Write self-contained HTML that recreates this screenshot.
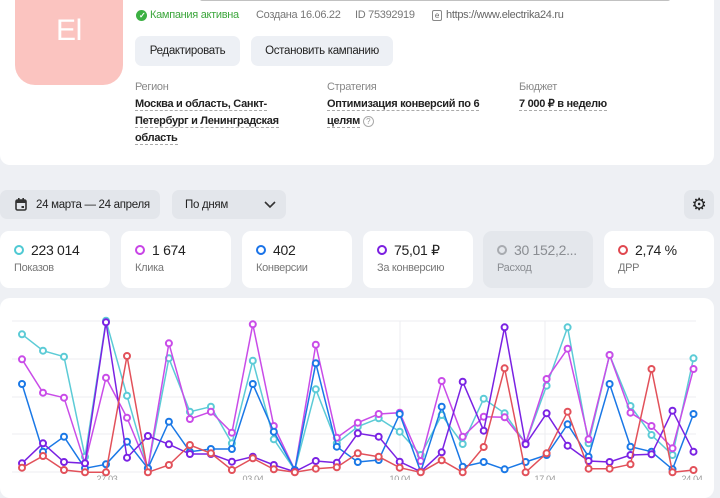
<!DOCTYPE html>
<html><head><meta charset="utf-8"><style>
*{box-sizing:border-box;margin:0;padding:0}
body{width:720px;height:480px;overflow:hidden;background:#eef0f4;font-family:"Liberation Sans",sans-serif;position:relative;color:#1f1f1f;letter-spacing:-0.3px}
.abs{position:absolute;white-space:nowrap}
.card{position:absolute;background:#fff;border-radius:10px}
.btn{position:absolute;background:#edf0f5;border-radius:7px;font-size:11.5px;display:flex;align-items:center;justify-content:center;color:#222;white-space:nowrap}
.tb{background:#e3e6eb}
.lbl{font-size:11px;color:#888}
.val{font-size:11px;font-weight:bold;color:#222;line-height:17px}
.val span{border-bottom:1px dashed #aaa}
.m{position:absolute;top:231px;width:110px;height:57px;background:#fff;border-radius:9px}
.m .d{position:absolute;left:14px;top:14px;width:10px;height:10px;border-radius:50%;border:2.5px solid}
.m .n{position:absolute;left:31px;top:11px;font-size:14px;color:#222;white-space:nowrap}
.m .s{position:absolute;left:14px;top:31px;font-size:11px;color:#777}
</style></head><body>
<div class="card" style="left:0;top:-10px;width:714px;height:175px;border-radius:0 0 10px 10px"></div>
<div class="abs" style="left:15px;top:-20px;width:108px;height:105px;background:#fbc4c0;border-radius:20px"></div>
<div class="abs" style="left:15px;top:14px;width:108px;text-align:center;color:#fff;font-size:30px">El</div>
<div class="abs" style="left:200px;top:-5px;width:470px;height:6px;background:#333;border-radius:2px;opacity:.3"></div>
<div class="abs" style="left:136px;top:10px;width:11px;height:11px;border-radius:50%;background:#3cb043"></div>
<div class="abs" style="left:139px;top:11px;color:#fff;font-size:8px;font-weight:bold">✓</div>
<div class="abs" style="left:150px;top:9px;font-size:11px;color:#3ca63c">Кампания активна</div>
<div class="abs" style="left:256px;top:9px;font-size:11px;color:#777">Создана 16.06.22</div>
<div class="abs" style="left:355px;top:9px;font-size:11px;color:#777">ID 75392919</div>
<div class="abs" style="left:432px;top:10px;width:10px;height:11px;border:1px solid #888;border-radius:2px;font-size:8px;line-height:9px;text-align:center;color:#666">e</div>
<div class="abs" style="left:446px;top:9px;font-size:11px;color:#666">https://www.electrika24.ru</div>
<div class="btn" style="left:135px;top:36px;width:105px;height:30px">Редактировать</div>
<div class="btn" style="left:251px;top:36px;width:142px;height:30px">Остановить кампанию</div>
<div class="abs lbl" style="left:135px;top:81px">Регион</div>
<div class="abs lbl" style="left:327px;top:81px">Стратегия</div>
<div class="abs lbl" style="left:519px;top:81px">Бюджет</div>
<div class="abs val" style="left:135px;top:96px;width:160px"><span>Москва и область, Санкт-</span><br><span>Петербург и Ленинградская</span><br><span>область</span></div>
<div class="abs val" style="left:327px;top:96px;width:180px"><span>Оптимизация конверсий по 6</span><br><span>целям</span> <span style="border:1px solid #aaa;border-radius:50%;display:inline-block;width:11px;height:11px;font-size:8px;line-height:9px;text-align:center;color:#999;font-weight:normal">?</span></div>
<div class="abs val" style="left:519px;top:96px"><span>7 000 ₽ в неделю</span></div>

<div class="btn tb" style="left:0;top:190px;width:160px;height:29px;justify-content:flex-start;padding-left:15px">
<svg width="12" height="13" viewBox="0 0 12 13" style="margin-right:9px"><rect x="1" y="2" width="10" height="10" rx="1.5" fill="none" stroke="#333" stroke-width="1.6"/><rect x="1" y="2" width="10" height="3" fill="#333"/><rect x="3" y="0" width="1.6" height="3" fill="#333"/><rect x="7.4" y="0" width="1.6" height="3" fill="#333"/><rect x="6.5" y="8" width="2.5" height="2" fill="#333"/></svg>24 марта — 24 апреля</div>
<div class="btn tb" style="left:172px;top:190px;width:114px;height:29px;justify-content:flex-start;padding-left:13px">По дням
<svg width="12" height="8" style="position:absolute;right:10px;top:11px"><path d="M1 1l5 5 5-5" stroke="#333" stroke-width="1.6" fill="none"/></svg></div>
<div class="btn tb" style="left:684px;top:190px;width:30px;height:29px;font-size:17px">⚙</div>

<div class="m" style="left:0"><div class="d" style="border-color:#4fc9d3"></div><div class="n">223 014</div><div class="s">Показов</div></div>
<div class="m" style="left:121px"><div class="d" style="border-color:#c844e6"></div><div class="n">1 674</div><div class="s">Клика</div></div>
<div class="m" style="left:242px"><div class="d" style="border-color:#1a73e8"></div><div class="n">402</div><div class="s">Конверсии</div></div>
<div class="m" style="left:363px"><div class="d" style="border-color:#7b1fe0"></div><div class="n">75,01 ₽</div><div class="s">За конверсию</div></div>
<div class="m" style="left:483px;background:#e4e7ec"><div class="d" style="border-color:#a8abb0"></div><div class="n" style="color:#8a8d92">30 152,2...</div><div class="s" style="color:#8a8d92">Расход</div></div>
<div class="m" style="left:604px"><div class="d" style="border-color:#e0474f"></div><div class="n">2,74 %</div><div class="s">ДРР</div></div>

<div class="card" style="left:0;top:298px;width:714px;height:200px"></div>
<svg id="ch" class="abs" style="left:0;top:0" width="720" height="480"></svg>
<script>
var s=document.getElementById('ch'),h='';
[321,359,397,434,472].forEach(function(y){h+='<line x1="12" x2="696" y1="'+y+'" y2="'+y+'" stroke="#eceef1"/>';});
[400,545].forEach(function(x){h+='<line x1="'+x+'" x2="'+x+'" y1="321" y2="472" stroke="#eceef1"/>';});
var lab=[[107,'27.03'],[253,'03.04'],[400,'10.04'],[545,'17.04'],[692,'24.04']];
lab.forEach(function(l){h+='<text x="'+l[0]+'" y="482" font-size="9" fill="#999" text-anchor="middle" font-family="Liberation Sans">'+l[1]+'</text>';});
var D=[
['#5ccbd6',[103,152,170,470,62,287,505,175,335,320,430,182,418,510,268,430,380,355,395,465,345,432,296,340,430,257,82,430,165,318,405,465,175]],
['#c94ce8',[178,278,293,490,233,353,505,130,357,335,398,73,378,510,134,413,368,342,338,483,243,410,350,352,430,237,146,418,165,338,378,445,207]],
['#1a78e6',[252,455,410,505,493,425,505,365,455,447,447,252,395,510,190,440,486,480,342,515,320,500,486,508,486,465,373,470,252,440,455,508,342]],
['#7a22e3',[490,430,486,490,67,473,408,433,462,462,485,470,495,515,483,488,400,410,485,515,457,245,392,82,433,340,437,483,486,465,463,332,455]],
['#e2515a',[503,468,510,517,517,168,517,495,435,460,510,475,508,517,506,502,460,470,503,517,481,517,441,205,517,460,335,506,506,493,207,517,510]]];
D.forEach(function(d){var p=[],c='';d[1].forEach(function(v,i){var x=(48+45.7*i)/2.178,y=v/3+300;p.push(x.toFixed(1)+','+y.toFixed(1));c+='<circle cx="'+x.toFixed(1)+'" cy="'+y.toFixed(1)+'" r="3" fill="#fff" stroke="'+d[0]+'" stroke-width="2"/>';});
h+='<polyline points="'+p.join(' ')+'" fill="none" stroke="'+d[0]+'" stroke-width="1.5"/>'+c;});
s.innerHTML=h;
</script>
</body></html>
